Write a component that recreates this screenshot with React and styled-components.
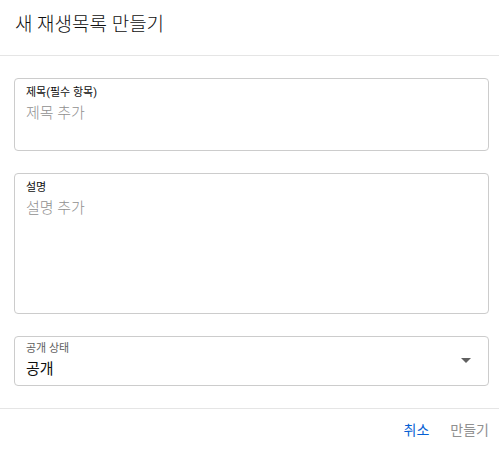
import React from "react";
import styled, { createGlobalStyle } from "styled-components";

const Global = createGlobalStyle`
  html, body { margin: 0; padding: 0; background: #fff; }
  body { font-family: Roboto, "Noto Sans CJK KR", sans-serif; }
`;

const Dialog = styled.div`
  width: 499px;
  height: 451px;
  display: flex;
  flex-direction: column;
  background: #fff;
`;

const Header = styled.div`
  display: flex;
  align-items: center;
  padding: 0 15px;
  border-bottom: 1px solid #e5e5e5;
  box-sizing: border-box;
  height: 56px;
`;

const Title = styled.h2`
  margin: 0;
  font-size: 19px;
  font-weight: 300;
  color: #0f0f0f;
  margin-top: -10px;
`;

const Body = styled.div`
  display: flex;
  flex-direction: column;
  gap: 22px;
  padding: 22px 10px 22px 14px;
  border-bottom: 1px solid #e5e5e5;
`;

const Field = styled.div`
  position: relative;
  height: ${(p) => p.$h}px;
  box-sizing: border-box;
  border: 1px solid #cccccc;
  border-radius: 4px;
  padding: ${(p) => p.$pt}px 12px 0 11px;
  display: flex;
  flex-direction: column;
`;

const Label = styled.div`
  font-size: 11px;
  line-height: 14px;
  color: ${(p) => (p.$muted ? "#606060" : "#0f0f0f")};
`;

const Value = styled.div`
  font-size: 15px;
  line-height: 20px;
  margin-top: 3px;
  font-weight: ${(p) => (p.$placeholder ? 300 : 400)};
  color: ${(p) => (p.$placeholder ? "#909090" : "#0f0f0f")};
`;

const Arrow = styled.div`
  position: absolute;
  right: 17px;
  top: 50%;
  margin-top: -3px;
  width: 0;
  height: 0;
  border-left: 5px solid transparent;
  border-right: 5px solid transparent;
  border-top: 5px solid #606060;
`;

const Footer = styled.div`
  flex: 1;
  display: flex;
  justify-content: flex-end;
  align-items: center;
  gap: 21px;
  padding: 0 10px 0 0;
  margin-top: -2px;
`;

const Button = styled.button`
  background: none;
  border: none;
  padding: 0;
  font-family: inherit;
  font-size: 14px;
  color: ${(p) => (p.$primary ? "#065fd4" : "#909090")};
  cursor: pointer;
`;

export default function App() {
  return (
    <>
      <Global />
      <Dialog>
        <Header>
          <Title>새 재생목록 만들기</Title>
        </Header>
        <Body>
          <Field $h={73} $pt={7}>
            <Label>제목(필수 항목)</Label>
            <Value $placeholder>제목 추가</Value>
          </Field>
          <Field $h={141} $pt={7}>
            <Label>설명</Label>
            <Value $placeholder>설명 추가</Value>
          </Field>
          <Field $h={50} $pt={5}>
            <Label $muted>공개 상태</Label>
            <Value>공개</Value>
            <Arrow />
          </Field>
        </Body>
        <Footer>
          <Button $primary>취소</Button>
          <Button>만들기</Button>
        </Footer>
      </Dialog>
    </>
  );
}
